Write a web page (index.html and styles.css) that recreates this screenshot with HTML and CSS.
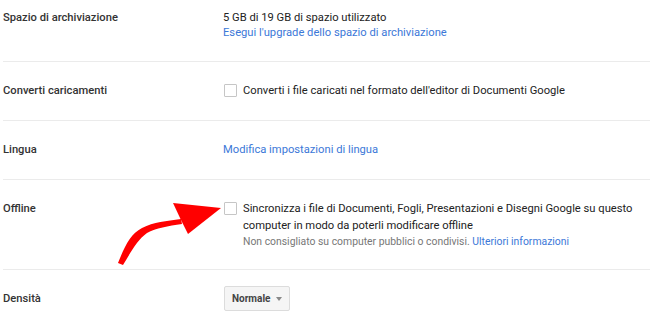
FILE: index.html
```html
<!DOCTYPE html>
<html lang="it">
<head>
  <meta charset="UTF-8">
  <title>Impostazioni</title>
  <link rel="stylesheet" href="styles.css">
</head>
<body>
  <div class="settings">
    <div class="row row-storage">
      <div class="label">Spazio di archiviazione</div>
      <div class="value">
        <div>5 GB di 19 GB di spazio utilizzato</div>
        <a class="link" href="#">Esegui l'upgrade dello spazio di archiviazione</a>
      </div>
    </div>

    <div class="row row-simple">
      <div class="label">Converti caricamenti</div>
      <div class="value check">
        <span class="box"></span>
        <span>Converti i file caricati nel formato dell'editor di Documenti Google</span>
      </div>
    </div>

    <div class="row row-simple">
      <div class="label">Lingua</div>
      <div class="value">
        <a class="link" href="#">Modifica impostazioni di lingua</a>
      </div>
    </div>

    <div class="row row-offline">
      <div class="label">Offline</div>
      <div class="value check">
        <span class="box"></span>
        <div class="check-text">
          <div class="main">Sincronizza i file di Documenti, Fogli, Presentazioni e Disegni Google su questo computer in modo da poterli modificare offline</div>
          <div class="hint">Non consigliato su computer pubblici o condivisi. <a class="link" href="#">Ulteriori informazioni</a></div>
        </div>
      </div>
    </div>

    <div class="row row-density">
      <div class="label">Densità</div>
      <div class="value">
        <button class="dropdown">Normale <span class="caret"></span></button>
      </div>
    </div>
  </div>

  <!-- red annotation arrow -->
  <svg class="arrow" width="650" height="328" viewBox="0 0 650 328">
    <path d="M118 263 C124 248 130 234 142 228 C154 222 166 221 181 219 L182 224 C168 226 156 228 147 233 C137 240 131 252 123 265 Z" fill="#f00"/>
    <polygon points="221,208 173,203 181,220 188,234" fill="#f00"/>
  </svg>
</body>
</html>
```

FILE: styles.css
```css
* {
  box-sizing: border-box;
}
body {
  margin: 0;
  background: #fff;
  font-family: Roboto, "Liberation Sans", sans-serif;
  font-size: 11.2px;
  color: #222;
}
.settings {
  padding-left: 3px;
}
.row {
  display: grid;
  grid-template-columns: 220px 1fr;
  border-bottom: 1px solid #ebebeb;
  line-height: 15px;
}
.row-storage {
  padding: 10px 0 21px;
}
.row-simple {
  padding: 21px 0 22px;
}
.row-offline {
  padding: 20px 0 20px;
}
.row-density {
  padding: 16px 0 16px;
  border-bottom: none;
  align-items: center;
}
.label {
  font-weight: 500;
  color: #333;
}
.row-offline .label {
  line-height: 17px;
}
.link {
  color: #3c78d8;
  text-decoration: none;
}
.check {
  display: flex;
  align-items: flex-start;
  gap: 6px;
}
.box {
  flex: none;
  width: 13px;
  height: 13px;
  margin-left: 1px;
  margin-top: 1px;
  border: 1px solid #c6c6c6;
  border-radius: 1px;
}
.row-offline .box {
  margin-top: 2px;
}
.check-text .main {
  line-height: 17px;
  max-width: 400px;
}
.check-text .hint {
  font-size: 10.4px;
  color: #777;
}
.dropdown {
  display: inline-flex;
  align-items: center;
  gap: 6px;
  height: 25px;
  margin-left: 1px;
  padding: 0 7px;
  background: #f5f5f5;
  border: 1px solid #dcdcdc;
  border-radius: 2px;
  font-family: Roboto, "Liberation Sans", sans-serif;
  font-size: 10px;
  font-weight: 700;
  color: #444;
}
.caret {
  width: 0;
  height: 0;
  border-left: 3px solid transparent;
  border-right: 3px solid transparent;
  border-top: 4px solid #888;
}
.arrow {
  position: absolute;
  left: 0;
  top: 0;
  pointer-events: none;
}
```
